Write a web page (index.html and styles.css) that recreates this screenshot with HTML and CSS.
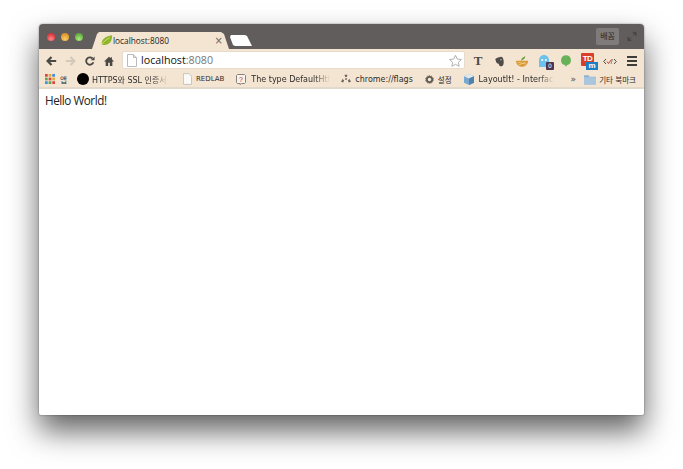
FILE: index.html
```html
<!DOCTYPE html>
<html lang="ko">
<head>
<meta charset="utf-8">
<title>localhost:8080</title>
<link rel="stylesheet" href="styles.css">
</head>
<body>
<div class="window">
  <div class="titlebar">
    <div class="lights">
      <span class="light red"></span><span class="light yellow"></span><span class="light green"></span>
    </div>
    <div class="tab">
      <svg class="leaf" width="12" height="11" viewBox="0 0 14 12"><path d="M1 11C0 6 4 1 13 0c0 6-2 10-7 11-2 .4-4 .4-5 0z" fill="#8fb52a"/><path d="M1 11C3 7 6 5 10 3" stroke="#d8e68a" fill="none"/></svg>
      <span class="tab-title">localhost:8080</span>
      <span class="tab-close">×</span>
    </div>
    <div class="newtab"></div>
    <div class="title-right">
      <span class="profile">배꼼</span>
      <svg width="10" height="11" viewBox="0 0 12 12"><path d="M7 1h4v4zM1 11V7l4 4zM7 5l2-2M3 9l2-2" fill="#4a4646" stroke="#4a4646"/></svg>
    </div>
  </div>
  <div class="toolbar">
    <svg class="nav nav-back" width="11" height="10" viewBox="0 0 14 12"><path d="M7 1L2 6l5 5M2 6h11" fill="none" stroke="#4b4945" stroke-width="2.8"/></svg>
    <svg class="nav nav-fwd" width="11" height="10" viewBox="0 0 14 12"><path d="M7 1l5 5-5 5M12 6H1" fill="none" stroke="#d3cabb" stroke-width="2.8"/></svg>
    <svg class="nav nav-reload" width="10" height="10" viewBox="0 0 12 12"><path d="M10 7.500A4.400 4.400 0 1 1 9 3" fill="none" stroke="#4b4945" stroke-width="2.200"/><path d="M7 5h4.500V.5z" fill="#4b4945"/></svg>
    <svg class="nav nav-home" width="10" height="10" viewBox="0 0 12 12"><path d="M6 1L0 6.500h2V12h3V8h2v4h3V6.500h2L9.500 4V1.500H8V2.600z" fill="#4b4945"/></svg>
    <div class="omnibox">
      <svg class="page" width="10" height="13" viewBox="0 0 10 13"><path d="M.5.500h6l3 3v9h-9z" fill="#fff" stroke="#bbb"/><path d="M6.500.500v3h3" fill="#ddd" stroke="#bbb"/></svg>
      <span class="url">localhost<span class="port">:8080</span></span>
      <svg class="star" width="13" height="13" viewBox="0 0 15 14"><path d="M7.500 1l2 4.300 4.800.6-3.500 3.200.9 4.600-4.200-2.300-4.200 2.300.9-4.600L.7 5.900l4.800-.6z" fill="#fff" stroke="#a5a5a5"/></svg>
    </div>
    <div class="exts">
      <span class="ext-t">T</span>
      <svg class="ext-ever" width="9" height="11" viewBox="0 0 12 13"><path d="M3 1.500L8 0c2 0 2.500 1.500 3 3s1 5 .2 7.500S8 13.500 6.500 12.500 6 9.500 4 9 1.500 7.500 1 5 0 3.500 0 3.500z" fill="#4f4d4a"/><circle cx="8" cy="4" r=".8" fill="#f4e5d2"/></svg>
      <svg class="ext-basket" width="12" height="11" viewBox="0 0 14 12"><path d="M0 5h14c0 4-3 7-7 7S0 9 0 5z" fill="#d99a3a"/><path d="M6 5c0-2 2-4 5-5-1 3-2 4-5 5z" fill="#5c9a33"/><path d="M2 7l10 2M3 10l8-3" stroke="#efc983"/></svg>
      <span class="ghost">
        <svg width="10" height="12" viewBox="0 0 10 12"><path d="M0 5a5 5 0 0 1 10 0v7H0z" fill="#6cc2ec"/><circle cx="3.200" cy="5" r="1" fill="#fff"/><circle cx="6.800" cy="5" r="1" fill="#fff"/></svg>
        <span class="ghost-badge">0</span>
      </span>
      <svg class="ext-pin" width="10" height="12" viewBox="0 0 13 15"><path d="M6.500 0a6.500 6.500 0 0 1 1.500 12.800L6.500 15 5 12.800A6.500 6.500 0 0 1 6.500 0z" fill="#67b158"/></svg>
      <span class="td">
        <span class="td-mark">TD</span>
        <span class="td-badge">m</span>
      </span>
      <svg class="code" width="14" height="7" viewBox="0 0 14 7"><path d="M3 1L.7 3.500 3 6M11 1l2.300 2.500L11 6" fill="none" stroke="#4c4a47"/><path d="M4 3.500l1.500 2L8.500 1.500" fill="none" stroke="#c0392b"/><path d="M9.500 1L8 6" stroke="#4c4a47" stroke-width=".6"/></svg>
      <span class="menu"><i></i><i></i><i></i></span>
    </div>
  </div>
  <div class="bookmarks">
    <span class="bm bm-apps">
      <svg width="10" height="10" viewBox="0 0 11 11"><g fill="#d9473b"><rect width="3" height="3"/><rect x="4" width="3" height="3" fill="#e7a63a"/><rect x="8" width="3" height="3" fill="#3f8fdc"/><rect y="4" width="3" height="3" fill="#5aa84a"/><rect x="4" y="4" width="3" height="3"/><rect x="8" y="4" width="3" height="3" fill="#e7a63a"/><rect y="8" width="3" height="3" fill="#3f8fdc"/><rect x="4" y="8" width="3" height="3" fill="#5aa84a"/><rect x="8" y="8" width="3" height="3"/></g></svg>
      <span class="ko">앱</span>
    </span>
    <span class="bm bm-https"><span class="dot"></span><span class="fade fade-https">HTTPS와 SSL 인증서 -</span></span>
    <span class="bm bm-redlab">
      <svg width="9" height="12" viewBox="0 0 10 13"><path d="M.5.500h6l3 3v9h-9z" fill="#fbfaf7" stroke="#c4c0b8"/></svg>
      <span class="redlab">REDLAB</span>
    </span>
    <span class="bm bm-type">
      <svg width="10" height="11" viewBox="0 0 10 11"><path d="M1.500.500h7l1 1v7l-1 1h-3L4 10.500v-1H1.500l-1-1v-7z" fill="#f8f2ea" stroke="#8a8078"/><text x="5" y="7.500" font-size="7" text-anchor="middle" fill="#b03a32" font-family="Liberation Sans">?</text></svg>
      <span class="fade fade-type">The type DefaultHttp</span>
    </span>
    <span class="bm bm-flags">
      <svg width="10" height="10" viewBox="0 0 13 11"><g fill="#6b6862"><circle cx="6.500" cy="5.500" r="1.200"/><path d="M4.500 0h4L7.500 3h-2zM0 9l2-3.500 2 1.500-1 3zM13 9l-2-3.500-2 1.500 1 3z"/></g></svg>
      <span>chrome://flags</span>
    </span>
    <span class="bm bm-set">
      <svg width="9" height="9" viewBox="0 0 10 10"><circle cx="5" cy="5" r="3" fill="none" stroke="#5f5c57" stroke-width="2"/><circle cx="5" cy="5" r="4.300" fill="none" stroke="#5f5c57" stroke-dasharray="1.500 1.200"/></svg>
      <span class="ko">설정</span>
    </span>
    <span class="bm bm-layout">
      <svg width="10" height="11" viewBox="0 0 11 12"><path d="M5.500 0l5.500 2.500v7L5.500 12 0 9.500v-7z" fill="#7aa9cf"/><path d="M5.500 0l5.500 2.500-5.500 2.500L0 2.500z" fill="#e4e8ea"/><path d="M5.500 5L11 2.500v7L5.500 12z" fill="#4e81ab"/></svg>
      <span class="fade fade-layout">LayoutIt! - Interface</span>
    </span>
    <span class="chevron">»</span>
    <span class="bm bm-other">
      <svg width="12" height="11" viewBox="0 0 13 11"><path d="M0 1h5l1 1.500h7V11H0z" fill="#8fb2d0"/><path d="M0 3h13v8H0z" fill="#a9c6de"/></svg>
      <span class="ko">기타 북마크</span>
    </span>
  </div>
  <div class="content">Hello World!</div>
</div>
</body>
</html>
```
FILE: styles.css
```css
* { box-sizing: border-box; }
html, body { margin: 0; height: 100%; background: #fff; overflow: hidden; }
body { padding: 24px 39px 54px; font-family: "DejaVu Sans", "Noto Sans CJK KR", sans-serif; }

.window {
  width: 605px;
  height: 391px;
  display: flex;
  flex-direction: column;
  background: #fff;
  border-radius: 4px 4px 2px 2px;
  overflow: hidden;
  box-shadow: 0 16px 30px rgba(0,0,0,.62), 0 0 2px rgba(0,0,0,.45);
}

.titlebar {
  height: 25px;
  flex: none;
  background: #625d5d;
  display: flex;
  align-items: flex-end;
  padding-left: 8px;
}
.lights { display: flex; gap: 6px; align-self: flex-start; margin-top: 9px; }
.light { width: 8px; height: 8px; border-radius: 50%; }
.red { background: radial-gradient(circle at 50% 75%, #f88 0, #d8333a 75%); }
.yellow { background: radial-gradient(circle at 50% 75%, #fc6 0, #d9922a 75%); }
.green { background: radial-gradient(circle at 50% 75%, #ae7 0, #5da63f 75%); }

.tab {
  width: 142px;
  height: 17px;
  margin-left: 7px;
  background: #f4e5d2;
  clip-path: polygon(0 100%, 2px 100%, 7px 2px, 9px 0, 131px 0, 134px 2px, 139px 100%, 142px 100%);
  display: flex;
  align-items: center;
  padding: 0 9px 0 11px;
}
.leaf { flex: none; }
.tab-title { flex: 1; color: #222; white-space: nowrap; font-family: "Open Sans", sans-serif; font-size: 8.300px; }
.tab-close { color: #6d675f; font-size: 10px; line-height: 1; }
.newtab {
  width: 22px;
  height: 11px;
  margin: 0 0 3px -2px;
  background: #fff;
  clip-path: polygon(0 2px, 1px 0, 15px 0, 17px 1px, 22px 100%, 5px 100%, 3px 90%);
}
.title-right {
  margin-left: auto;
  align-self: flex-start;
  display: flex;
  align-items: center;
  gap: 8px;
  margin-top: 4px;
  padding-right: 7px;
}
.profile {
  width: 23px;
  height: 17px;
  background: #7f7b7b;
  border-radius: 2px;
  color: #2b2828;
  font-size: 8px;
  text-align: center;
  line-height: 17px;
}

.toolbar {
  height: 21px;
  flex: none;
  background: #f4e5d2;
  display: flex;
  align-items: center;
  padding: 1px 0 0 7px;
}
.nav { flex: none; margin-top: 2px; }
.nav-back { margin-right: 8px; }
.nav-fwd { margin-right: 9px; }
.nav-reload { margin-right: 9px; }
.nav-home { margin-right: 8px; }
.omnibox {
  width: 343px;
  height: 18px;
  background: #fff;
  border: 1px solid #e6dccd;
  border-radius: 2px;
  display: flex;
  align-items: center;
  padding: 0 2px 0 4px;
  flex: none;
}
.page { flex: none; margin-right: 4px; }
.url { flex: 1; font-family: "Open Sans", sans-serif; font-size: 10.700px; color: #111; }
.port { color: #777; }
.star { flex: none; }
.exts {
  display: flex;
  align-items: center;
  flex: 1;
  padding-top: 2px;
}
.exts > * { flex: none; }
.ext-t { font: bold 13px "Liberation Serif", serif; color: #4c4a47; width: 10px; margin-left: 8px; text-align: center; }
.ext-ever { margin-left: 12px; }
.ext-basket { margin-left: 12px; }
.ghost { position: relative; width: 15px; height: 15px; display: block; margin-left: 11px; margin-top: 2px; }
.ghost svg { display: block; }
.ghost-badge {
  position: absolute;
  right: 0; bottom: 0;
  width: 8px; height: 8px;
  background: #4d3550;
  color: #fff;
  font-size: 6px;
  line-height: 8px;
  text-align: center;
  border-radius: 1px;
}
.ext-pin { margin-left: 7px; }
.td { position: relative; width: 17px; height: 17px; display: block; margin-left: 10px; }
.td-mark {
  display: block;
  width: 13px; height: 13px;
  background: #d8402a;
  color: #fff;
  font: bold 8px/12px "Liberation Sans", sans-serif;
  letter-spacing: -.5px;
  text-align: center;
  border-radius: 1px;
}
.td-badge {
  position: absolute;
  right: 0; bottom: 0;
  width: 12px; height: 8px;
  background: #1f7fc4;
  color: #fff;
  font: bold 8px/7px "Liberation Sans", sans-serif;
  text-align: center;
}
.code { margin-left: 5px; }
.menu { display: flex; flex-direction: column; gap: 2px; width: 10px; margin-left: 10px; }
.menu i { display: block; height: 2px; background: #3f3d3a; }

.bookmarks {
  height: 19px;
  flex: none;
  background: #f4e5d2;
  border-bottom: 2px solid #e2d9cb;
  display: flex;
  align-items: center;
  padding: 1px 0 0 6px;
  font-size: 8px;
  color: #2e2c2a;
  white-space: nowrap;
}
.bm { display: flex; align-items: center; gap: 4px; flex: none; }
.ko { font-size: 7.500px; }
.redlab { font-size: 7px; }
.bm-apps { gap: 5px; width: 32px; }
.bm-https { gap: 3px; }
.bm-redlab { margin-left: 15px; gap: 4px; }
.bm-type { margin-left: 12px; gap: 5px; }
.bm-flags { margin-left: 11px; gap: 4px; }
.bm-set { margin-left: 12px; gap: 4px; }
.bm-layout { margin-left: 12px; gap: 5px; }
.bm-other { margin-left: 8px; gap: 3px; }
.chevron { margin-left: 17px; font-size: 9px; color: #4c4a47; }
.dot { width: 12px; height: 12px; border-radius: 50%; background: #000; flex: none; }
.fade {
  display: block;
  overflow: hidden;
  -webkit-mask-image: linear-gradient(to right, #000 80%, transparent);
  mask-image: linear-gradient(to right, #000 80%, transparent);
}
.fade-https { width: 76px; }
.fade-type { width: 79px; }
.fade-layout { width: 75px; }

.content {
  flex: 1;
  padding: 3px 6px;
  font-family: "Open Sans", "Liberation Sans", sans-serif;
  font-size: 11.700px;
  letter-spacing: -.45px;
  color: #222;
}
```
